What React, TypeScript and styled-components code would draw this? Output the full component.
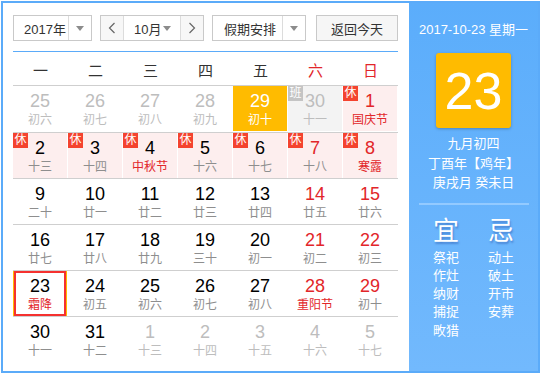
import * as React from 'react';
import styled, { createGlobalStyle } from 'styled-components';

const GlobalStyle = createGlobalStyle`
  body {
    margin: 0;
    font-family: "Liberation Sans", "Noto Sans CJK SC", sans-serif;
    background: #fff;
  }
`

type Tone = 'normal' | 'weekend' | 'other' | 'selected';
type Fill = 'none' | 'holiday' | 'work' | 'selected' | 'today';

type Day = {
  num: number;
  lunar: string;
  tone: Tone;
  fill?: Fill;
  festival?: boolean;
  badge?: 'rest' | 'work';
}

const weeks: Day[][] = [
  [
    { num: 25, lunar: '初六', tone: 'other' },
    { num: 26, lunar: '初七', tone: 'other' },
    { num: 27, lunar: '初八', tone: 'other' },
    { num: 28, lunar: '初九', tone: 'other' },
    { num: 29, lunar: '初十', tone: 'selected', fill: 'selected' },
    { num: 30, lunar: '十一', tone: 'other', fill: 'work', badge: 'work' },
    { num: 1, lunar: '国庆节', tone: 'weekend', fill: 'holiday', festival: true, badge: 'rest' },
  ],
  [
    { num: 2, lunar: '十三', tone: 'normal', fill: 'holiday', badge: 'rest' },
    { num: 3, lunar: '十四', tone: 'normal', fill: 'holiday', badge: 'rest' },
    { num: 4, lunar: '中秋节', tone: 'normal', fill: 'holiday', festival: true, badge: 'rest' },
    { num: 5, lunar: '十六', tone: 'normal', fill: 'holiday', badge: 'rest' },
    { num: 6, lunar: '十七', tone: 'normal', fill: 'holiday', badge: 'rest' },
    { num: 7, lunar: '十八', tone: 'weekend', fill: 'holiday', badge: 'rest' },
    { num: 8, lunar: '寒露', tone: 'weekend', fill: 'holiday', festival: true, badge: 'rest' },
  ],
  [
    { num: 9, lunar: '二十', tone: 'normal' },
    { num: 10, lunar: '廿一', tone: 'normal' },
    { num: 11, lunar: '廿二', tone: 'normal' },
    { num: 12, lunar: '廿三', tone: 'normal' },
    { num: 13, lunar: '廿四', tone: 'normal' },
    { num: 14, lunar: '廿五', tone: 'weekend' },
    { num: 15, lunar: '廿六', tone: 'weekend' },
  ],
  [
    { num: 16, lunar: '廿七', tone: 'normal' },
    { num: 17, lunar: '廿八', tone: 'normal' },
    { num: 18, lunar: '廿九', tone: 'normal' },
    { num: 19, lunar: '三十', tone: 'normal' },
    { num: 20, lunar: '初一', tone: 'normal' },
    { num: 21, lunar: '初二', tone: 'weekend' },
    { num: 22, lunar: '初三', tone: 'weekend' },
  ],
  [
    { num: 23, lunar: '霜降', tone: 'normal', fill: 'today', festival: true },
    { num: 24, lunar: '初五', tone: 'normal' },
    { num: 25, lunar: '初六', tone: 'normal' },
    { num: 26, lunar: '初七', tone: 'normal' },
    { num: 27, lunar: '初八', tone: 'normal' },
    { num: 28, lunar: '重阳节', tone: 'weekend', festival: true },
    { num: 29, lunar: '初十', tone: 'weekend' },
  ],
  [
    { num: 30, lunar: '十一', tone: 'normal' },
    { num: 31, lunar: '十二', tone: 'normal' },
    { num: 1, lunar: '十三', tone: 'other' },
    { num: 2, lunar: '十四', tone: 'other' },
    { num: 3, lunar: '十五', tone: 'other' },
    { num: 4, lunar: '十六', tone: 'other' },
    { num: 5, lunar: '十七', tone: 'other' },
  ],
];

const weekdays = ['一', '二', '三', '四', '五', '六', '日'];

const Frame = styled.div`
  margin: 1px 0 0 1px;
  width: 539px;
  height: 372px;
  box-sizing: border-box;
  border: 2px solid #5babf9;
  display: flex;
  overflow: hidden;
`

const Main = styled.div`
  width: 406px;
  flex-shrink: 0;
  box-sizing: border-box;
  padding: 12px 11px 0 10px;
  background: #fff;
`

const Toolbar = styled.div`
  display: flex;
  height: 26px;
  color: #333;
  font-size: 13px;
  white-space: nowrap;
`

const SelectBox = styled.div<{ $width: number; $gap: number }>`
  width: ${p => p.$width}px;
  flex-shrink: 0;
  margin-right: ${p => p.$gap}px;
  box-sizing: border-box;
  border: 1px solid #c9c9c9;
  display: flex;
  align-items: stretch;
  background: #fff;
`

const SelectLabel = styled.div<{ $pad: number }>`
  flex: 1;
  display: flex;
  align-items: center;
  padding-left: ${p => p.$pad}px;
  border-right: 1px solid #dcdcdc;
`

const CaretCell = styled.div`
  width: 22px;
  flex-shrink: 0;
  display: flex;
  align-items: center;
  justify-content: center;
  &::after {
    content: '';
    border-top: 5px solid #8c8c8c;
    border-left: 4px solid transparent;
    border-right: 4px solid transparent;
  }
`

const MonthLabel = styled.div`
  flex: 1;
  display: flex;
  align-items: center;
  justify-content: space-between;
  padding: 0 9px 0 10px;
  border-left: 1px solid #dcdcdc;
  border-right: 1px solid #dcdcdc;
  &::after {
    content: '';
    border-top: 5px solid #8c8c8c;
    border-left: 4px solid transparent;
    border-right: 4px solid transparent;
  }
`

const NavButton = styled.div`
  width: 22px;
  flex-shrink: 0;
  display: flex;
  align-items: center;
  justify-content: center;
  background: #f7f7f7;
`

const TodayButton = styled.div`
  width: 82px;
  flex-shrink: 0;
  box-sizing: border-box;
  border: 1px solid #c9c9c9;
  background: #f6f6f6;
  display: flex;
  align-items: center;
  justify-content: center;
`

const BlueRule = styled.div`
  margin-top: 10px;
  height: 1px;
  background: #5babf9;
`

const WeekHeader = styled.div`
  display: grid;
  grid-template-columns: repeat(7, 55px);
  height: 33px;
  align-items: center;
  font-size: 15px;
  border-bottom: 1px solid #cfcfcf;
`

const WeekDay = styled.div<{ $red: boolean }>`
  text-align: center;
  color: ${p => (p.$red ? '#e2262a' : '#333')};
  padding-top: 2px;
`

const Week = styled.div<{ $first: boolean }>`
  display: grid;
  grid-template-columns: repeat(7, 55px);
  height: 46px;
  box-sizing: border-box;
  border-top: ${p => (p.$first ? 'none' : '1px solid #cfcfcf')};
`

const fills: Record<Fill, string> = {
  none: 'transparent',
  holiday: '#fdeeee',
  work: '#f3f3f3',
  selected: '#ffbb00',
  today: 'transparent',
};

const Cell = styled.div<{ $fill: Fill }>`
  position: relative;
  width: 54px;
  height: 45px;
  box-sizing: border-box;
  padding-top: 5px;
  text-align: center;
  background: ${p => fills[p.$fill]};
  ${p =>
    p.$fill === 'today'
      ? `border-left: 1px solid #ffbb00; border-right: 1px solid #ffbb00;
         box-shadow: inset 0 0 0 2px #f5312f;`
      : ''}
`

const numColors: Record<Tone, string> = {
  normal: '#000',
  weekend: '#e2262a',
  other: '#bdbdbd',
  selected: '#fff',
};

const lunarColors: Record<Tone, string> = {
  normal: '#8e8e8e',
  weekend: '#8e8e8e',
  other: '#bdbdbd',
  selected: '#fff',
};

const DayNum = styled.div<{ $tone: Tone }>`
  font-size: 18px;
  line-height: 20px;
  color: ${p => numColors[p.$tone]};
`

const Lunar = styled.div<{ $tone: Tone; $festival: boolean }>`
  font-size: 12px;
  line-height: 16px;
  margin-top: 1px;
  color: ${p => (p.$festival ? '#e2262a' : lunarColors[p.$tone])};
`

const Badge = styled.span<{ $kind: 'rest' | 'work' }>`
  position: absolute;
  left: 0;
  top: 0;
  width: 15px;
  height: 15px;
  line-height: 15px;
  font-size: 12px;
  color: #fff;
  text-align: center;
  background: ${p => (p.$kind === 'rest' ? '#f4432f' : '#c4c4c4')};
`

const Panel = styled.div`
  flex: 1;
  background: linear-gradient(#5badfb, #72b9fd);
  color: #fff;
  display: flex;
  flex-direction: column;
  align-items: center;
  padding-top: 18px;
`

const PanelDate = styled.div`
  font-size: 13px;
  line-height: 18px;
  white-space: nowrap;
`

const BigDay = styled.div`
  margin-top: 14px;
  width: 75px;
  height: 75px;
  border-radius: 3px;
  background: #ffbb00;
  box-shadow: 0 1px 3px rgba(0, 0, 0, 0.25);
  display: flex;
  align-items: center;
  justify-content: center;
  font-size: 52px;
  line-height: 1;
`

const LunarInfo = styled.div`
  margin-top: 6px;
  font-size: 13px;
  line-height: 19.5px;
  text-align: center;
  white-space: nowrap;
`

const PanelRule = styled.div`
  margin-top: 10px;
  width: 110px;
  height: 2px;
  background: #93caff;
`

const Almanac = styled.div`
  margin-top: 11px;
  display: grid;
  grid-template-columns: 26px 26px;
  column-gap: 29px;
`

const AlmanacHead = styled.div`
  font-size: 26px;
  line-height: 30px;
  text-shadow: 1px 2px 2px rgba(30, 70, 160, 0.45);
  margin-bottom: 3px;
`

const AlmanacItem = styled.div`
  font-size: 13px;
  line-height: 18.3px;
  white-space: nowrap;
`

function Chevron({ dir }: { dir: 'left' | 'right' }) {
  return (
    <svg width="8" height="12" viewBox="0 0 8 12">
      <polyline
        points={dir === 'left' ? '6.5,1 1.5,6 6.5,11' : '1.5,1 6.5,6 1.5,11'}
        fill="none"
        stroke="#666"
        strokeWidth="1.2"
      />
    </svg>
  )
}

const good = ['祭祀', '作灶', '纳财', '捕捉', '畋猎'];
const bad = ['动土', '破土', '开市', '安葬'];

export default function App() {
  return (
    <>
      <GlobalStyle />
      <Frame>
        <Main>
          <Toolbar>
            <SelectBox $width={79} $gap={8}>
              <SelectLabel $pad={10}>2017年</SelectLabel>
              <CaretCell />
            </SelectBox>
            <SelectBox $width={104} $gap={8}>
              <NavButton><Chevron dir="left" /></NavButton>
              <MonthLabel>10月</MonthLabel>
              <NavButton><Chevron dir="right" /></NavButton>
            </SelectBox>
            <SelectBox $width={94} $gap={10}>
              <SelectLabel $pad={11}>假期安排</SelectLabel>
              <CaretCell />
            </SelectBox>
            <TodayButton>返回今天</TodayButton>
          </Toolbar>
          <BlueRule />
          <WeekHeader>
            {weekdays.map((w, i) => (
              <WeekDay key={w} $red={i >= 5}>{w}</WeekDay>
            ))}
          </WeekHeader>
          {weeks.map((week, wi) => (
            <Week key={wi} $first={wi === 0}>
              {week.map((d, di) => (
                <Cell key={di} $fill={d.fill ?? 'none'}>
                  {d.badge && <Badge $kind={d.badge}>{d.badge === 'rest' ? '休' : '班'}</Badge>}
                  <DayNum $tone={d.tone}>{d.num}</DayNum>
                  <Lunar $tone={d.tone} $festival={!!d.festival}>{d.lunar}</Lunar>
                </Cell>
              ))}
            </Week>
          ))}
        </Main>
        <Panel>
          <PanelDate>2017-10-23 星期一</PanelDate>
          <BigDay>23</BigDay>
          <LunarInfo>
            <div>九月初四</div>
            <div>丁酉年【鸡年】</div>
            <div>庚戌月 癸未日</div>
          </LunarInfo>
          <PanelRule />
          <Almanac>
            <div>
              <AlmanacHead>宜</AlmanacHead>
              {good.map(g => <AlmanacItem key={g}>{g}</AlmanacItem>)}
            </div>
            <div>
              <AlmanacHead>忌</AlmanacHead>
              {bad.map(b => <AlmanacItem key={b}>{b}</AlmanacItem>)}
            </div>
          </Almanac>
        </Panel>
      </Frame>
    </>
  )
}
